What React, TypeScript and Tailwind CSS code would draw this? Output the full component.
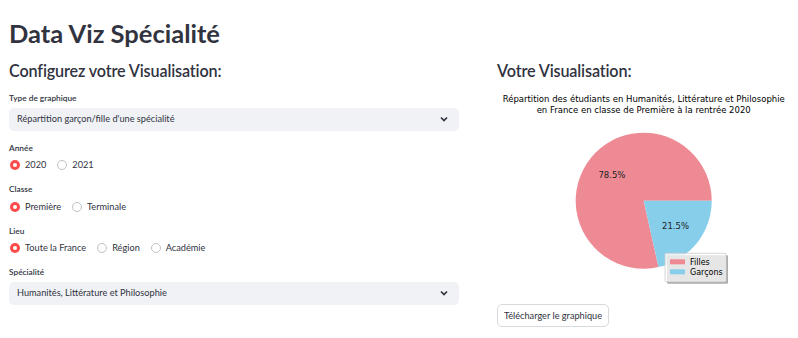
import React from "react";

const TEXT = "text-[#31333F]";

function Radio({ label, selected }: { label: string; selected?: boolean }) {
  return (
    <div className="flex items-center gap-[5px]">
      {selected ? (
        <span className="flex h-[10px] w-[10px] items-center justify-center rounded-full bg-[#FF4B4B]">
          <span className="h-[4px] w-[4px] rounded-full bg-white" />
        </span>
      ) : (
        <span className="h-[10px] w-[10px] rounded-full border border-[#BFC1C6] bg-white" />
      )}
      <span className="text-[9.2px] leading-[16px]">{label}</span>
    </div>
  );
}

function RadioGroup({ label, options }: { label: string; options: string[] }) {
  return (
    <div className="flex flex-col">
      <div className="text-[8.3px] font-semibold leading-[12px]">{label}</div>
      <div className="mt-[3.5px] flex h-[16px] items-center gap-[11px] pl-[1px]">
        {options.map((o, i) => (
          <Radio key={o} label={o} selected={i === 0} />
        ))}
      </div>
    </div>
  );
}

function Select({ value }: { value: string }) {
  return (
    <div className="mt-[3.5px] flex h-[23px] items-center justify-between rounded-[5px] bg-[#F0F2F6] pl-[8px] pr-[11px]">
      <span className="text-[9.2px]">{value}</span>
      <svg width="8" height="6" viewBox="0 0 8 6">
        <path d="M1 1.5 L4 4.5 L7 1.5" fill="none" stroke="#31333F" strokeWidth="1.7" />
      </svg>
    </div>
  );
}

function Chart() {
  const cx = 643.7;
  const cy = 200.7;
  const r = 68;
  const a = (282.6 * Math.PI) / 180;
  const ex = cx + r * Math.cos(a);
  const ey = cy - r * Math.sin(a);
  const sx = cx + r;
  const font = "'DejaVu Sans', sans-serif";
  const fs = "8.5";
  return (
    <svg width="292" height="202" viewBox="497 88 292 202" className="block">
      <text x="643.7" y="102" textAnchor="middle" fontFamily={font} fontSize={fs} fill="#000">
        Répartition des étudiants en Humanités, Littérature et Philosophie
      </text>
      <text x="643.7" y="113" textAnchor="middle" fontFamily={font} fontSize={fs} fill="#000">
        en France en classe de Première à la rentrée 2020
      </text>
      <path d={`M${cx} ${cy} L${sx} ${cy} A${r} ${r} 0 1 0 ${ex} ${ey} Z`} fill="#EE8A93" />
      <path d={`M${cx} ${cy} L${ex} ${ey} A${r} ${r} 0 0 0 ${sx} ${cy} Z`} fill="#87CEEB" />
      <text x="611.9" y="178.3" textAnchor="middle" fontFamily={font} fontSize={fs} fill="#222">
        78.5%
      </text>
      <text x="675.5" y="229.3" textAnchor="middle" fontFamily={font} fontSize={fs} fill="#222">
        21.5%
      </text>
      {/* legend */}
      <rect x="667" y="255.3" width="61" height="28.4" rx="1" fill="#ADADAD" />
      <rect x="665" y="253.3" width="61" height="28.4" rx="1" fill="#FFFFFF" fillOpacity="0.8" stroke="#CCCCCC" strokeWidth="0.8" />
      <rect x="667" y="255.3" width="58.6" height="26" fill="#E6E6E6" />
      <rect x="670" y="259.3" width="15" height="5" fill="#EE8A93" />
      <rect x="670" y="269.3" width="15" height="5" fill="#87CEEB" />
      <text x="690" y="265" fontFamily={font} fontSize="8" fill="#000">
        Filles
      </text>
      <text x="690" y="275" fontFamily={font} fontSize="8" fill="#000">
        Garçons
      </text>
    </svg>
  );
}

export default function App() {
  return (
    <div className={`h-[338px] w-[798px] bg-white ${TEXT}`} style={{ fontFamily: "Lato, 'Noto Sans', sans-serif" }}>
      <div className="px-[9px]">
        <h1 className="mt-[16px] text-[25.5px] font-bold leading-[34px]">Data Viz Spécialité</h1>
        <div className="mt-[10px] flex gap-[38px]">
          <div className="flex w-[450px] flex-col">
            <h3 className="text-[16.2px] font-semibold leading-[22px] tracking-[-0.15px]">Configurez votre Visualisation:</h3>
            <div className="mt-[10px] flex flex-col">
              <div className="text-[8.3px] font-semibold leading-[12px]">Type de graphique</div>
              <Select value="Répartition garçon/fille d'une spécialité" />
            </div>
            <div className="mt-[11px] flex flex-col gap-[10px]">
              <RadioGroup label="Année" options={["2020", "2021"]} />
              <RadioGroup label="Classe" options={["Première", "Terminale"]} />
              <RadioGroup label="Lieu" options={["Toute la France", "Région", "Académie"]} />
              <div className="flex flex-col">
                <div className="text-[8.3px] font-semibold leading-[12px]">Spécialité</div>
                <Select value="Humanités, Littérature et Philosophie" />
              </div>
            </div>
          </div>
          <div className="flex w-[292px] flex-col">
            <h3 className="text-[16.2px] font-semibold leading-[22px] tracking-[-0.15px]">Votre Visualisation:</h3>
            <div className="mt-[6px]">
              <Chart />
            </div>
            <div className="mt-[11px]">
              <button className="h-[22.5px] w-[112px] rounded-[5px] border border-[#D9DADE] bg-white text-[9.2px] leading-none">
                Télécharger le graphique
              </button>
            </div>
          </div>
        </div>
      </div>
    </div>
  );
}
